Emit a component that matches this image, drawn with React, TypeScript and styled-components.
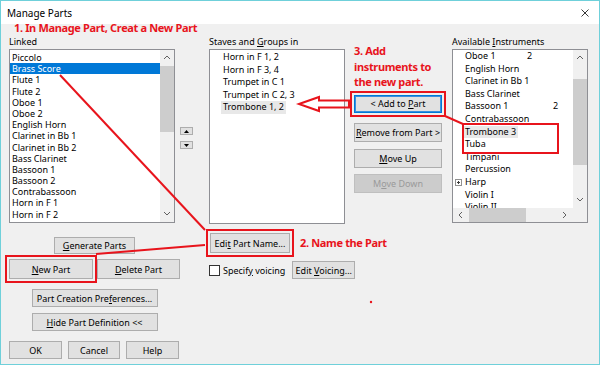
import React from "react";
import styled, { createGlobalStyle, css } from "styled-components";

const RED = "#e8141c";

const GlobalStyle = createGlobalStyle`
  html, body { margin: 0; padding: 0; background: #ffffff; }
  body { font-family: "Noto Sans", sans-serif; }
`;

const Window = styled.div`
  position: relative;
  width: 600px;
  height: 365px;
  box-sizing: border-box;
  border: 1px solid #6fd0da;
  background: #f0f0f0;
  font-family: "Noto Sans", sans-serif;
  font-size: 9px;
  color: #000;
  overflow: hidden;
`;

const TitleBar = styled.div`
  height: 23px;
  background: #ffffff;
  display: flex;
  align-items: center;
  justify-content: space-between;
  padding: 0 10px 0 6px;
  font-size: 10px;
`;

const Body = styled.div`
  padding: 10px 0 0 8px;
`;

const TopRow = styled.div`
  display: flex;
  align-items: flex-start;
`;

const Column = styled.div<{ $w: number; $ml?: number }>`
  display: flex;
  flex-direction: column;
  width: ${(p) => p.$w}px;
  margin-left: ${(p) => p.$ml ?? 0}px;
`;

const FieldLabel = styled.div`
  height: 15px;
  line-height: 15px;
  white-space: nowrap;
`;

const ListBox = styled.div<{ $h: number }>`
  height: ${(p) => p.$h}px;
  box-sizing: border-box;
  border: 1px solid #8e8f94;
  background: #ffffff;
  display: flex;
  overflow: hidden;
`;

const GridListBox = styled(ListBox)`
  display: grid;
  grid-template-columns: 1fr 14px;
  grid-template-rows: 1fr 14px;
`;

const Items = styled.div<{ $pl: number; $pt: number }>`
  flex: 1;
  overflow: hidden;
  padding: ${(p) => p.$pt}px 0 0 ${(p) => p.$pl}px;
  white-space: nowrap;
`;

const Row = styled.div<{ $h: number; $selected?: boolean }>`
  display: flex;
  align-items: center;
  height: ${(p) => p.$h}px;
  line-height: ${(p) => p.$h}px;
  ${(p) =>
    p.$selected &&
    css`
      background: #0078d7;
      color: #ffffff;
    `}
`;

const RowText = styled.span`
  padding-left: 2px;
`;

const Shade = styled.span`
  background: #e8e8e8;
  padding: 0 2px;
  margin-left: -2px;
`;

const Name = styled.span<{ $w: number }>`
  display: inline-block;
  width: ${(p) => p.$w}px;
`;

const MarkedGroup = styled.div`
  width: 91px;
  outline: 2px solid ${RED};
  outline-offset: 1px;
`;

const Expander = styled.span`
  width: 7px;
  height: 7px;
  flex: none;
  box-sizing: border-box;
  border: 1px solid #919191;
  margin-left: -10px;
  margin-right: 3px;
  position: relative;
  &::before,
  &::after {
    content: "";
    position: absolute;
    background: #3c3c3c;
  }
  &::before {
    left: 1px;
    right: 1px;
    top: 2px;
    height: 1px;
  }
  &::after {
    top: 1px;
    bottom: 1px;
    left: 2px;
    width: 1px;
  }
`;

const VTrack = styled.div`
  width: 14px;
  background: #f0f0f0;
  display: flex;
  flex-direction: column;
`;

const ArrowCell = styled.div`
  height: 16px;
  flex: 0 0 16px;
  display: flex;
  align-items: center;
  justify-content: center;
`;

const TrackBody = styled.div`
  flex: 1;
  display: flex;
  flex-direction: column;
`;

const Thumb = styled.div<{ $offset: number; $len: number }>`
  margin-top: ${(p) => p.$offset}px;
  height: ${(p) => p.$len}px;
  width: 100%;
  background: #cdcdcd;
`;

const HTrack = styled.div`
  background: #f0f0f0;
  display: flex;
`;

const HArrowCell = styled.div`
  width: 16px;
  flex: 0 0 16px;
  display: flex;
  align-items: center;
  justify-content: center;
`;

const HTrackBody = styled.div`
  flex: 1;
  display: flex;
`;

const HThumb = styled.div<{ $offset: number; $len: number }>`
  margin-left: ${(p) => p.$offset}px;
  width: ${(p) => p.$len}px;
  background: #cdcdcd;
`;

const Corner = styled.div`
  background: #f0f0f0;
`;

const Button = styled.button<{ $w: number; $h?: number; $default?: boolean; $marked?: boolean }>`
  width: ${(p) => p.$w}px;
  height: ${(p) => p.$h ?? 19}px;
  flex: none;
  box-sizing: border-box;
  margin: 0;
  padding: 0;
  background: #e1e1e1;
  border: 1px solid #adadad;
  font: inherit;
  color: #000000;
  white-space: nowrap;
  ${(p) =>
    p.$default &&
    css`
      border: 1px solid #0078d7;
      box-shadow: inset 0 0 0 1px #3c8fdc;
    `}
  ${(p) =>
    p.$marked &&
    css`
      outline: 2px solid ${RED};
      outline-offset: 2px;
    `}
  &:disabled {
    background: #cccccc;
    border-color: #bfbfbf;
    color: #9a9a9a;
  }
`;

const TinyButtons = styled.div`
  display: flex;
  flex-direction: column;
  gap: 6px;
  width: 13px;
  margin-left: 5px;
  padding-top: 93px;
`;

const TinyButton = styled.div`
  width: 13px;
  height: 8px;
  box-sizing: border-box;
  background: #e1e1e1;
  border: 1px solid #adadad;
  display: flex;
  align-items: center;
  justify-content: center;
`;

const Note = styled.div`
  color: ${RED};
  font-weight: 700;
  font-size: 11px;
  letter-spacing: -0.35px;
  line-height: 15.5px;
  white-space: nowrap;
`;

const SideNote = styled(Note)`
  margin-left: 10px;
`;

const StepNote = styled(Note)`
  position: absolute;
  left: 13px;
  top: 20px;
  line-height: 13px;
`;

const ActionStack = styled.div`
  display: flex;
  flex-direction: column;
  width: 88px;
  margin-left: 9px;
  padding-top: 9px;
`;

const Gap = styled.div<{ $h: number }>`
  height: ${(p) => p.$h}px;
  flex: none;
`;

const BottomRow = styled.div`
  display: flex;
  align-items: flex-start;
`;

const PartButtons = styled.div`
  width: 171px;
  display: flex;
  flex-direction: column;
  align-items: center;
  padding-top: 13px;
`;

const ButtonRow = styled.div<{ $gap: number }>`
  display: flex;
  gap: ${(p) => p.$gap}px;
  align-self: stretch;
`;

const NameArea = styled.div`
  display: flex;
  flex-direction: column;
  margin-left: 30px;
  padding-top: 9px;
`;

const InlineRow = styled.div`
  display: flex;
  align-items: center;
`;

const CheckBox = styled.span`
  width: 11px;
  height: 11px;
  box-sizing: border-box;
  border: 1px solid #333333;
  background: #ffffff;
  margin: 0 3px 0 -1px;
`;

const VoicingButton = styled(Button)`
  margin-left: 7px;
`;

const Overlay = styled.svg`
  position: absolute;
  left: -1px;
  top: -1px;
  pointer-events: none;
`;

const Chevron = ({ dir }: { dir: "up" | "down" | "left" | "right" }) => {
  const pts = {
    up: "1,5 4,2 7,5",
    down: "1,2 4,5 7,2",
    left: "5,1 2,4 5,7",
    right: "2,1 5,4 2,7",
  }[dir];
  return (
    <svg width="8" height="8" viewBox="0 0 8 8">
      <polyline points={pts} fill="none" stroke="#606060" strokeWidth="1" />
    </svg>
  );
};

const Tri = ({ up }: { up?: boolean }) => (
  <svg width="5" height="3" viewBox="0 0 5 3">
    <polygon points={up ? "0,3 2.5,0 5,3" : "0,0 2.5,3 5,0"} fill="#000" />
  </svg>
);

const VScroll = ({ offset, len }: { offset: number; len: number }) => (
  <VTrack>
    <ArrowCell>
      <Chevron dir="up" />
    </ArrowCell>
    <TrackBody>
      <Thumb $offset={offset} $len={len} />
    </TrackBody>
    <ArrowCell>
      <Chevron dir="down" />
    </ArrowCell>
  </VTrack>
);

const linked = [
  "Piccolo",
  "Brass Score",
  "Flute 1",
  "Flute 2",
  "Oboe 1",
  "Oboe 2",
  "English Horn",
  "Clarinet in Bb 1",
  "Clarinet in Bb 2",
  "Bass Clarinet",
  "Bassoon 1",
  "Bassoon 2",
  "Contrabassoon",
  "Horn in F 1",
  "Horn in F 2",
  "Horn in F 3",
];

const staves = ["Horn in F 1, 2", "Horn in F 3, 4", "Trumpet in C 1", "Trumpet in C 2, 3"];

export default function App() {
  return (
    <>
      <GlobalStyle />
      <Window>
        <TitleBar>
          <span>Manage Parts</span>
          <svg width="8" height="8" viewBox="0 0 8 8">
            <path d="M0.5 0.5 L7.5 7.5 M7.5 0.5 L0.5 7.5" stroke="#222" strokeWidth="0.9" />
          </svg>
        </TitleBar>
        <Body>
          <TopRow>
            <Column $w={166}>
              <FieldLabel>Linked</FieldLabel>
              <ListBox $h={174}>
                <Items $pl={0} $pt={2}>
                  {linked.map((n) => (
                    <Row key={n} $h={11.2} $selected={n === "Brass Score"}>
                      <RowText>{n}</RowText>
                    </Row>
                  ))}
                </Items>
                <VScroll offset={0} len={66} />
              </ListBox>
            </Column>

            <TinyButtons>
              <TinyButton>
                <Tri up />
              </TinyButton>
              <TinyButton>
                <Tri />
              </TinyButton>
            </TinyButtons>

            <Column $w={136} $ml={16}>
              <FieldLabel>
                Staves and <u>G</u>roups in
              </FieldLabel>
              <ListBox $h={175}>
                <Items $pl={13} $pt={1}>
                  {staves.map((n) => (
                    <Row key={n} $h={12.5}>
                      {n}
                    </Row>
                  ))}
                  <Row $h={12.5}>
                    <Shade>Trombone 1, 2</Shade>
                  </Row>
                </Items>
              </ListBox>
            </Column>

            <ActionStack>
              <Note>
                3. Add
                <br />
                instruments to
                <br />
                the new part.
              </Note>
              <Gap $h={5} />
              <Button $w={88} $h={18} $default $marked>
                &lt; Add to <u>P</u>art
              </Button>
              <Gap $h={10} />
              <Button $w={88}>
                <u>R</u>emove from Part &gt;
              </Button>
              <Gap $h={7} />
              <Button $w={88}>
                <u>M</u>ove Up
              </Button>
              <Gap $h={6} />
              <Button $w={88} disabled>
                M<u>o</u>ve Down
              </Button>
            </ActionStack>

            <Column $w={136} $ml={10}>
              <FieldLabel>
                Available <u>I</u>nstruments
              </FieldLabel>
              <GridListBox $h={174}>
                <Items $pl={12} $pt={0}>
                  <Row $h={12.6}>
                    <Name $w={62}>Oboe 1</Name>2
                  </Row>
                  <Row $h={12.6}>English Horn</Row>
                  <Row $h={12.6}>Clarinet in Bb 1</Row>
                  <Row $h={12.6}>Bass Clarinet</Row>
                  <Row $h={12.6}>
                    <Name $w={88}>Bassoon 1</Name>2
                  </Row>
                  <Row $h={12.6}>Contrabassoon</Row>
                  <MarkedGroup>
                    <Row $h={12.6}>
                      <Shade>Trombone 3</Shade>
                    </Row>
                    <Row $h={12.6}>Tuba</Row>
                  </MarkedGroup>
                  <Row $h={12.6}>Timpani</Row>
                  <Row $h={12.6}>Percussion</Row>
                  <Row $h={12.6}>
                    <Expander />
                    Harp
                  </Row>
                  <Row $h={12.6}>Violin I</Row>
                  <Row $h={12.6}>Violin II</Row>
                </Items>
                <VScroll offset={13} len={86} />
                <HTrack>
                  <HArrowCell>
                    <Chevron dir="left" />
                  </HArrowCell>
                  <HTrackBody>
                    <HThumb $offset={0} $len={57} />
                  </HTrackBody>
                  <HArrowCell>
                    <Chevron dir="right" />
                  </HArrowCell>
                </HTrack>
                <Corner />
              </GridListBox>
            </Column>
          </TopRow>

          <BottomRow>
            <PartButtons>
              <Button $w={81} $h={17}>
                <u>G</u>enerate Parts
              </Button>
              <Gap $h={5} />
              <ButtonRow $gap={4}>
                <Button $w={84} $h={20} $marked>
                  <u>N</u>ew Part
                </Button>
                <Button $w={83} $h={20}>
                  <u>D</u>elete Part
                </Button>
              </ButtonRow>
              <Gap $h={10} />
              <Button $w={126} $h={18}>
                Part Creation Pre<u>f</u>erences...
              </Button>
              <Gap $h={6} />
              <Button $w={126} $h={18}>
                <u>H</u>ide Part Definition &lt;&lt;
              </Button>
              <Gap $h={10} />
              <ButtonRow $gap={6}>
                <Button $w={53} $h={18}>
                  OK
                </Button>
                <Button $w={52} $h={18}>
                  Cancel
                </Button>
                <Button $w={53} $h={18}>
                  Help
                </Button>
              </ButtonRow>
            </PartButtons>

            <NameArea>
              <InlineRow>
                <Button $w={80} $h={20} $marked>
                  Edi<u>t</u> Part Name...
                </Button>
                <SideNote>2. Name the Part</SideNote>
              </InlineRow>
              <Gap $h={8} />
              <InlineRow>
                <CheckBox />
                <span>
                  Specif<u>y</u> voicing
                </span>
                <VoicingButton $w={63} $h={18}>
                  Edit <u>V</u>oicing...
                </VoicingButton>
              </InlineRow>
            </NameArea>
          </BottomRow>
        </Body>

        <StepNote>1. In Manage Part, Creat a New Part</StepNote>

        <Overlay width="600" height="365" viewBox="0 0 600 365">
          <g stroke={RED} strokeWidth="2" fill="none">
            <line x1="60" y1="75" x2="205" y2="230" />
            <line x1="96" y1="254" x2="205" y2="245" />
            <line x1="445" y1="116" x2="463" y2="124" />
            <polygon points="299,104 319,97 319,100.5 349,100.5 349,107.5 319,107.5 319,111" />
          </g>
          <circle cx="371" cy="302" r="1.2" fill={RED} />
        </Overlay>
      </Window>
    </>
  );
}
